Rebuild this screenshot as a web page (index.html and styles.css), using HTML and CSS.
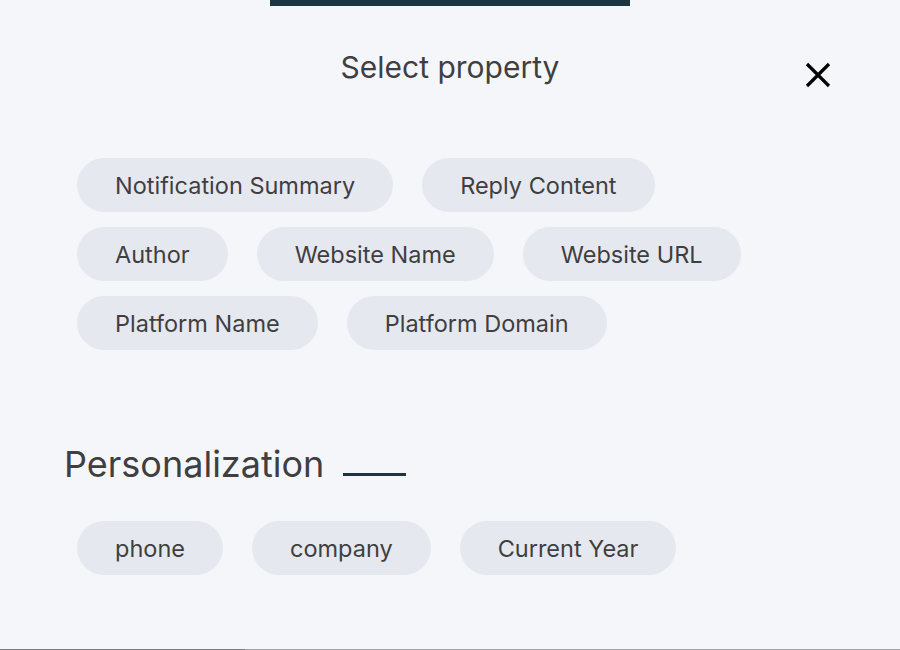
FILE: index.html
```html
<!DOCTYPE html>
<html lang="en">
<head>
<meta charset="utf-8">
<title>Select property</title>
<link rel="stylesheet" href="styles.css">
</head>
<body>
<div class="page">
  <div class="topbar"></div>
  <header class="header">
    <div></div>
    <h1 class="title">Select property</h1>
    <button class="close" aria-label="Close">
      <svg width="26" height="26" viewBox="0 0 26 26"><path d="M2 2 L24 24 M24 2 L2 24" stroke="#000" stroke-width="3.2" fill="none"/></svg>
    </button>
  </header>
  <section class="chips first">
    <span class="chip">Notification Summary</span>
    <span class="chip">Reply Content</span>
    <span class="chip">Author</span>
    <span class="chip">Website Name</span>
    <span class="chip">Website URL</span>
    <span class="chip">Platform Name</span>
    <span class="chip">Platform Domain</span>
  </section>
  <div class="section-head">
    <h2 class="section-title">Personalization</h2>
    <span class="section-line"></span>
  </div>
  <section class="chips second">
    <span class="chip">phone</span>
    <span class="chip">company</span>
    <span class="chip">Current Year</span>
  </section>
  <div class="bottom-line"><span class="thumb"></span></div>
</div>
</body>
</html>
```
FILE: styles.css
```css
html, body {
  margin: 0;
  padding: 0;
}
body {
  background: #f5f6fa;
  font-family: Inter, "Noto Sans", sans-serif;
  color: #3f3f41;
}
.page {
  height: 650px;
  display: flex;
  flex-direction: column;
  overflow: hidden;
}
.topbar {
  width: 360px;
  height: 6px;
  margin: 0 auto;
  background: #1b3543;
}
.header {
  display: grid;
  grid-template-columns: 1fr auto 1fr;
  align-items: center;
  margin-top: 40px;
  height: 40px;
}
.title {
  margin: 0;
  font-size: 30px;
  font-weight: 400;
  line-height: 40px;
  color: #3f3f41;
}
.close {
  justify-self: end;
  margin-right: 69px;
  margin-top: 16px;
  background: none;
  border: 0;
  padding: 0;
  width: 26px;
  height: 26px;
  display: flex;
}
.chips {
  display: flex;
  flex-wrap: wrap;
  column-gap: 29px;
  row-gap: 15px;
  padding-left: 77px;
  width: 703px;
}
.chips.first {
  margin-top: 72px;
}
.chip {
  height: 54px;
  padding: 0 38px;
  border-radius: 27px;
  background: #e6e8ef;
  display: flex;
  align-items: center;
  font-size: 23.5px;
  color: #3f3f41;
}
.section-head {
  display: flex;
  align-items: flex-end;
  margin-top: 94px;
  padding-left: 64px;
}
.section-title {
  margin: 0;
  font-size: 36px;
  font-weight: 400;
  line-height: 40px;
  color: #3f3f41;
}
.section-line {
  width: 63px;
  height: 3px;
  background: #1b3543;
  margin-left: 19px;
  margin-bottom: 8px;
}
.chips.second {
  margin-top: 37px;
}
.bottom-line {
  margin-top: auto;
  height: 1px;
  background: #a2a2a8;
  display: flex;
}
.thumb {
  width: 245px;
  background: #7c7c82;
}
```
